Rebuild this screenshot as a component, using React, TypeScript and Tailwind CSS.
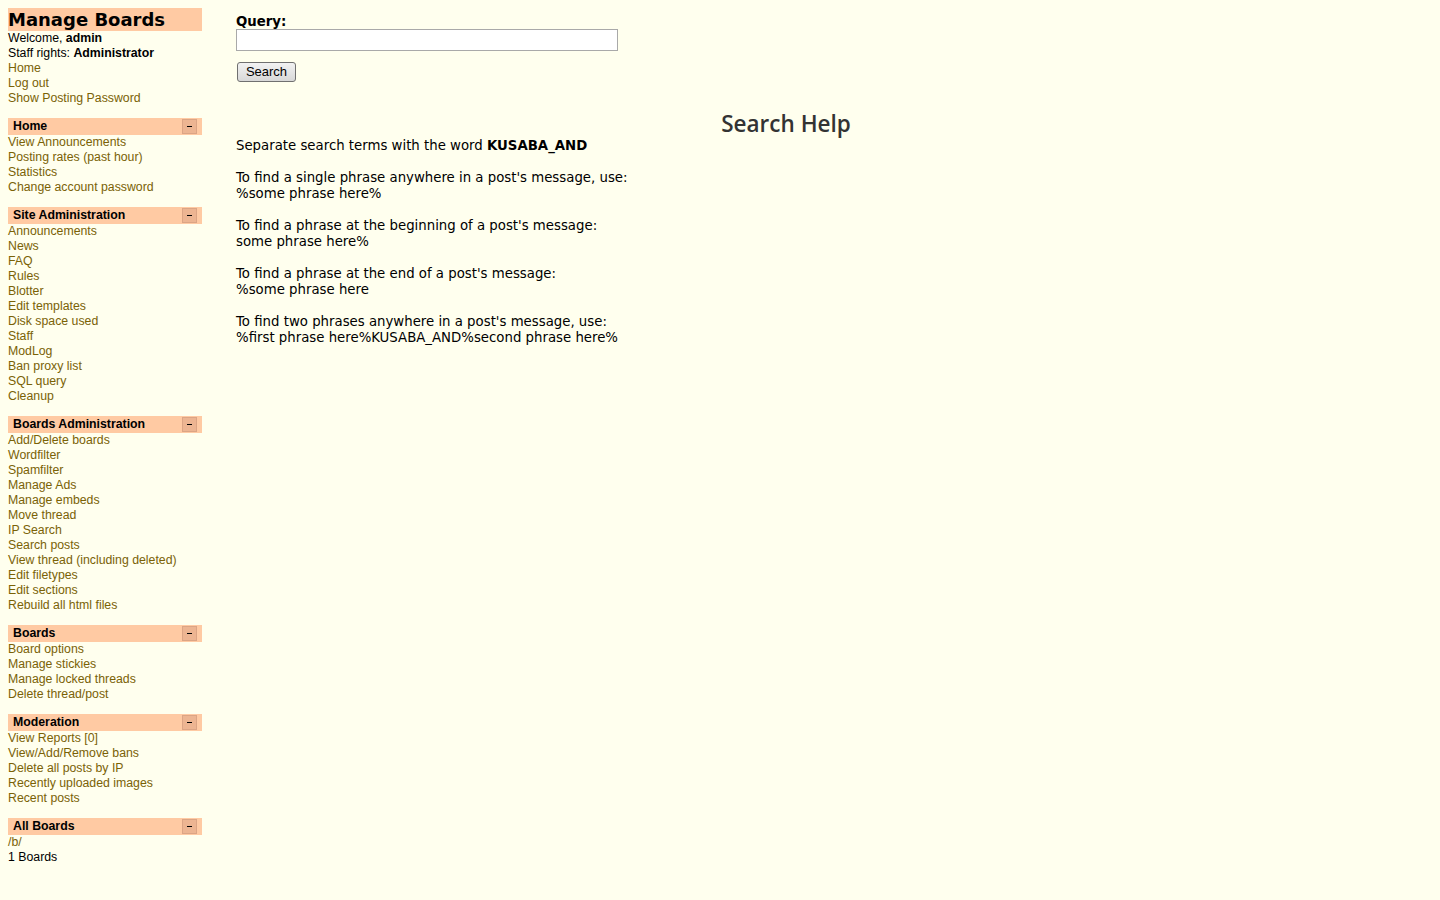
import React from "react";

const sections: { title: string; items: string[] }[] = [
  {
    title: "Home",
    items: ["View Announcements", "Posting rates (past hour)", "Statistics", "Change account password"],
  },
  {
    title: "Site Administration",
    items: [
      "Announcements",
      "News",
      "FAQ",
      "Rules",
      "Blotter",
      "Edit templates",
      "Disk space used",
      "Staff",
      "ModLog",
      "Ban proxy list",
      "SQL query",
      "Cleanup",
    ],
  },
  {
    title: "Boards Administration",
    items: [
      "Add/Delete boards",
      "Wordfilter",
      "Spamfilter",
      "Manage Ads",
      "Manage embeds",
      "Move thread",
      "IP Search",
      "Search posts",
      "View thread (including deleted)",
      "Edit filetypes",
      "Edit sections",
      "Rebuild all html files",
    ],
  },
  {
    title: "Boards",
    items: ["Board options", "Manage stickies", "Manage locked threads", "Delete thread/post"],
  },
  {
    title: "Moderation",
    items: [
      "View Reports [0]",
      "View/Add/Remove bans",
      "Delete all posts by IP",
      "Recently uploaded images",
      "Recent posts",
    ],
  },
];

function SectionHeader({ title }: { title: string }) {
  return (
    <div className="mt-[12px] flex h-[17px] items-center justify-between bg-[#ffcaa3] pl-[5px] pr-[5px]">
      <span className="text-[12.3px] font-bold leading-[17px] text-black">{title}</span>
      <span className="flex h-[15px] w-[15px] items-center justify-center border border-[#dca585] bg-[#edb592]">
        <span className="block h-[1px] w-[5px] bg-black" />
      </span>
    </div>
  );
}

function MenuLink({ children }: { children: React.ReactNode }) {
  return (
    <a href="#" className="block text-[12.3px] leading-[15px] text-[#7a6206] no-underline">
      {children}
    </a>
  );
}

export default function App() {
  return (
    <div className="flex min-h-[900px] w-full bg-[#ffffee] font-['Liberation_Sans',Arial,sans-serif] text-black">
      {/* sidebar */}
      <div className="ml-2 mt-2 w-[194px] shrink-0">
        <div className="h-[23px] bg-[#ffcaa3] font-['DejaVu_Sans',Verdana,sans-serif] text-[18px] font-bold leading-[23px]">
          Manage Boards
        </div>
        <div className="text-[12.3px] leading-[15px]">
          Welcome, <b>admin</b>
        </div>
        <div className="text-[12.3px] leading-[15px]">
          Staff rights: <b>Administrator</b>
        </div>
        <MenuLink>Home</MenuLink>
        <MenuLink>Log out</MenuLink>
        <MenuLink>Show Posting Password</MenuLink>

        {sections.map((s) => (
          <div key={s.title}>
            <SectionHeader title={s.title} />
            {s.items.map((it) => (
              <MenuLink key={it}>{it}</MenuLink>
            ))}
          </div>
        ))}

        <SectionHeader title="All Boards" />
        <MenuLink>/b/</MenuLink>
        <div className="text-[12.3px] leading-[15px]">1 Boards</div>
      </div>

      {/* main */}
      <div className="ml-[34px] w-[1100px] pt-[14px] font-['DejaVu_Sans',Verdana,sans-serif] text-[13.3px] leading-[16px] text-black">
        <div className="font-bold leading-[15px]">Query:</div>
        <input
          type="text"
          className="block h-[22px] w-[382px] border border-[#a9a9a9] bg-white px-1 outline-none"
        />
        <button className="mt-[11px] ml-[1px] h-[20px] w-[59px] rounded-[3px] border border-[#707070] bg-gradient-to-b from-[#f2f2f2] to-[#d8d8d8] font-['Liberation_Sans',Arial,sans-serif] text-[13px] leading-[18px] text-black">
          Search
        </button>

        <h2 className="mt-[28px] text-center font-['Open_Sans',sans-serif] text-[22.5px] font-semibold leading-[28px] text-[#333333]">
          Search Help
        </h2>

        <div>
          <p>
            Separate search terms with the word <b>KUSABA_AND</b>
          </p>
          <p className="mt-4">
            To find a single phrase anywhere in a post's message, use:
            <br />
            %some phrase here%
          </p>
          <p className="mt-4">
            To find a phrase at the beginning of a post's message:
            <br />
            some phrase here%
          </p>
          <p className="mt-4">
            To find a phrase at the end of a post's message:
            <br />
            %some phrase here
          </p>
          <p className="mt-4">
            To find two phrases anywhere in a post's message, use:
            <br />
            %first phrase here%KUSABA_AND%second phrase here%
          </p>
        </div>
      </div>
    </div>
  );
}
